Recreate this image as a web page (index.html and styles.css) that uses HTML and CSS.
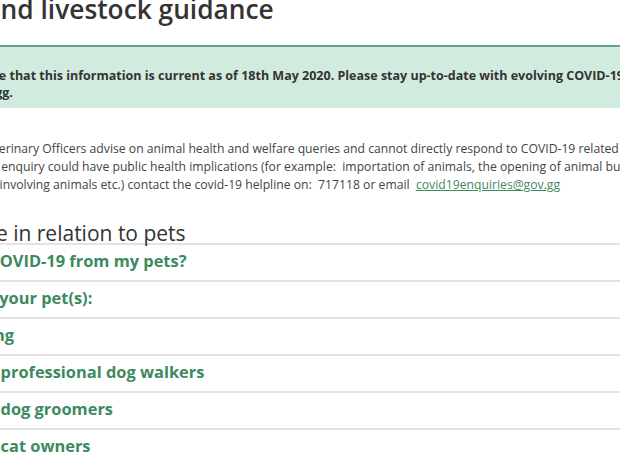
FILE: index.html
```html
<!DOCTYPE html>
<html lang="en">
  <head>
    <meta charset="UTF-8" />
    <meta name="viewport" content="width=device-width, initial-scale=1.0" />
    <title>Pets and livestock guidance</title>
    <link rel="stylesheet" href="styles.css">
  </head>
  <body>
    <div class="page">
      <h1>Pets and livestock guidance</h1>

      <div class="callout">
        <p>Please note that this information is current as of 18th May 2020. Please stay up-to-date with evolving COVID-19 guidance at<br>www.gov.gg.</p>
      </div>

      <p class="intro">
        The State Veterinary Officers advise on animal health and welfare queries and cannot directly respond to COVID-19 related queries.<br>
        cases. If your enquiry could have public health implications (for example:&nbsp; importation of animals, the opening of animal businesses,<br>
        emergencies involving animals etc.) contact the covid-19 helpline on:&nbsp; 717118 or email&nbsp; <a href="#">covid19enquiries@gov.gg</a>
      </p>

      <h2>Guidance in relation to pets</h2>

      <ul class="accordion">
        <li><a href="#">Can I get COVID-19 from my pets?</a></li>
        <li><a href="#">Caring for your pet(s):</a></li>
        <li><a href="#">Dog walking</a></li>
        <li><a href="#">Advice for professional dog walkers</a></li>
        <li><a href="#">Advice for dog groomers</a></li>
        <li><a href="#">Advice for cat owners</a></li>
      </ul>
    </div>
  </body>
</html>
```

FILE: styles.css
```css
body {
  margin: 0;
  font-family: "Open Sans", Arial, sans-serif;
  color: #333;
  background: #fff;
  overflow: hidden;
}

.page {
  width: 800px;
  margin-left: -76px;
}

h1 {
  font-size: 26.3px;
  font-weight: 600;
  line-height: 30px;
  margin: -6px 0 21px;
  color: #333;
}

.callout {
  background: #d1ebde;
  border-top: 2px solid #69a486;
  margin-left: -20px;
  padding: 20px 20px 7px 30px;
}

.callout p {
  margin: 0;
  font-size: 12.5px;
  font-weight: 700;
  line-height: 17px;
}

.intro {
  font-size: 12.2px;
  line-height: 18px;
  color: #444;
  margin: 32px 0 29px;
  white-space: nowrap;
}

.intro a {
  color: #3d8a5f;
}

h2 {
  font-size: 21px;
  font-weight: 400;
  line-height: 20px;
  margin: 0 0 0 -9px;
}

.accordion {
  list-style: none;
  margin: 0 0 0 -10px;
  padding: 0;
  border-top: 2px solid #e3e3e3;
}

.accordion li {
  height: 37px;
  box-sizing: border-box;
  padding-bottom: 4px;
  border-bottom: 2px solid #e3e3e3;
  display: flex;
  align-items: center;
}

.accordion a {
  color: #3d8a5f;
  font-weight: 700;
  font-size: 16.4px;
  text-decoration: none;
}
```
